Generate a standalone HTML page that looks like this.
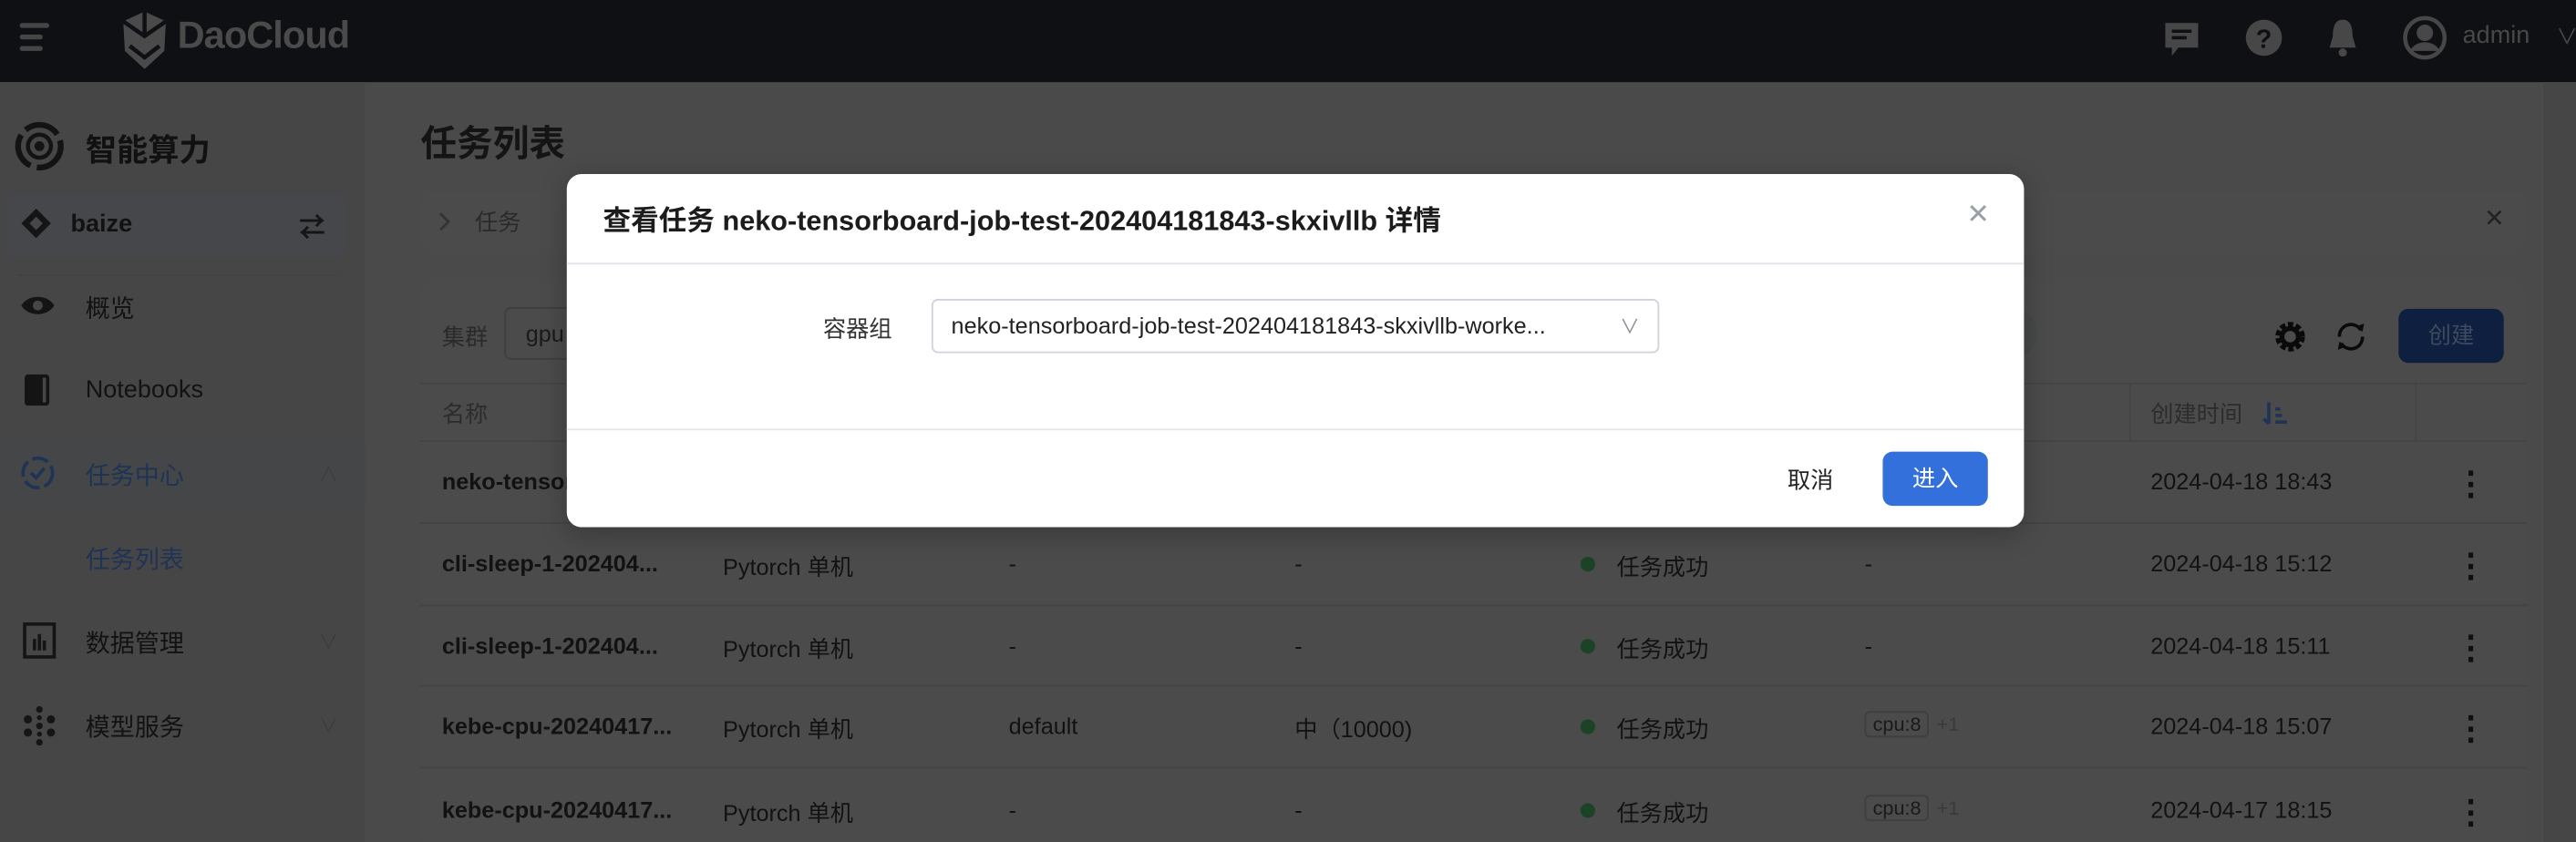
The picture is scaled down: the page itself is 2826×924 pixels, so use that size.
<!DOCTYPE html>
<html><head><meta charset="utf-8"><style>
*{box-sizing:border-box;margin:0;padding:0}
html,body{width:2826px;height:924px;overflow:hidden;background:#4a4a4a}
#w{width:1568px;height:513px;transform:scale(1.80230);transform-origin:0 0;position:relative;font-family:"Liberation Sans","Noto Sans CJK SC",sans-serif;color:#121212;background:#4a4a4a}
.a{position:absolute;white-space:nowrap}
.hdr{left:0;top:0;width:1568px;height:50px;background:#0f1013}
.side{left:0;top:50px;width:222px;height:463px;background:#464646}
.card{background:#4b4b4b;border-radius:8px}
.t14{font-size:14px}
.b{font-weight:bold}
.row{position:absolute;left:256px;width:1282px;height:50px;border-top:1px solid #444}
.dot{position:absolute;width:9px;height:9px;border-radius:50%;background:#1c4326}
.tag{border:1px solid #3e3e3e;border-radius:3px;padding:0 4px;font-size:12px;color:#1a1a1a}
.dm{font-size:20px;font-weight:bold;color:#0f0f0f}
</style></head><body><div id="w">
<div class="a hdr"></div>
<div class="a" style="left:12px;top:14px;width:18px;height:3px;background:#454545;border-radius:2px"></div>
<div class="a" style="left:12px;top:21px;width:14px;height:3px;background:#454545;border-radius:2px"></div>
<div class="a" style="left:12px;top:28px;width:14px;height:3px;background:#454545;border-radius:2px"></div>
<svg class="a" style="left:70px;top:5px" width="36" height="40" viewBox="0 0 36 40"><path d="M18 2 L31 8 L30 26 L18 37 L6 26 L5 8 Z" fill="#4a4a4a"/><path d="M18 2 L18 17 M5 8 L18 17 L31 8 M9 23 L18 30 L27 23" stroke="#0f1013" stroke-width="2.5" fill="none"/></svg>
<div class="a" style="left:108px;top:8px;font-size:23px;font-weight:bold;color:#4a4a4a;letter-spacing:-0.5px">DaoCloud</div>
<svg class="a" style="left:1316px;top:12px" width="24" height="26" viewBox="0 0 24 26"><path d="M2 2 H22 V17 H10 L6 22 V17 H2 Z" fill="#474747"/><path d="M6 7 H18 M6 11 H15" stroke="#0f1013" stroke-width="2"/></svg>
<svg class="a" style="left:1366px;top:10px" width="24" height="26"><circle cx="12" cy="13" r="11" fill="#474747"/><text x="12" y="19" font-size="16" font-weight="bold" text-anchor="middle" fill="#0f1013" font-family="Liberation Sans">?</text></svg>
<svg class="a" style="left:1414px;top:10px" width="24" height="26" viewBox="0 0 24 26"><path d="M12 2 C7 2 6 7 6 12 L4 19 H20 L18 12 C18 7 17 2 12 2Z" fill="#474747"/><circle cx="12" cy="22" r="2.5" fill="#474747"/></svg>
<svg class="a" style="left:1462px;top:9px" width="28" height="30"><circle cx="14" cy="14" r="12" fill="none" stroke="#474747" stroke-width="2.5"/><circle cx="14" cy="11" r="5" fill="#474747"/><path d="M5 22 C8 15 20 15 23 22" fill="#474747"/></svg>
<div class="a" style="left:1499px;top:13px;font-size:15px;color:#484848">admin</div>
<div class="a" style="left:1556px;top:12px;font-size:13px;color:#484848">∨</div>

<div class="a side"></div>
<svg class="a" style="left:8px;top:72px" width="32" height="34"><circle cx="16" cy="17" r="13" fill="none" stroke="#131313" stroke-width="3.5" stroke-dasharray="22 4"/><circle cx="16" cy="17" r="7" fill="none" stroke="#131313" stroke-width="2.5"/><circle cx="16" cy="17" r="3" fill="#131313"/></svg>
<div class="a" style="left:52px;top:77px;font-size:19px;font-weight:bold;color:#111">智能算力</div>
<div class="a" style="left:4px;top:117px;width:206px;height:40px;background:#45474a;border-radius:6px"></div>
<svg class="a" style="left:12px;top:126px" width="20" height="20"><path d="M10 1 L19 10 L10 19 L1 10Z M10 6 L14 10 L10 14 L6 10Z" fill="#151515" fill-rule="evenodd"/></svg>
<div class="a b" style="left:43px;top:128px;font-size:15px">baize</div>
<div class="a" style="left:182px;top:125px;font-size:16px;font-weight:bold;color:#151515">⇄</div>
<div class="a" style="left:11px;top:167px;width:194px;height:1px;background:#424242"></div>
<svg class="a" style="left:12px;top:176px" width="22" height="20"><path d="M1 10 C5 3 17 3 21 10 C17 17 5 17 1 10Z" fill="#141414"/><circle cx="11" cy="10" r="3" fill="#464646"/></svg>
<div class="a" style="left:52px;top:177px;font-size:15px">概览</div>
<svg class="a" style="left:14px;top:227px" width="18" height="22"><rect x="1" y="1" width="15" height="19" rx="2" fill="#141414"/><rect x="12" y="3" width="2" height="15" fill="#464646"/></svg>
<div class="a" style="left:52px;top:229px;font-size:15px">Notebooks</div>
<div class="a" style="left:0;top:268px;width:222px;height:40px;background:#444648"></div>
<svg class="a" style="left:12px;top:277px" width="22" height="22"><circle cx="11" cy="11" r="9" fill="none" stroke="#1e3356" stroke-width="2" stroke-dasharray="10 3"/><path d="M7 11 L10 14 L15 8" stroke="#1e3356" stroke-width="2" fill="none"/></svg>
<div class="a" style="left:52px;top:279px;font-size:15px;color:#1e3356">任务中心</div>
<div class="a" style="left:194px;top:280px;font-size:12px;color:#3d3d3d">∧</div>
<div class="a" style="left:52px;top:330px;font-size:15px;color:#1e3356">任务列表</div>
<svg class="a" style="left:13px;top:378px" width="22" height="24"><rect x="2" y="2" width="18" height="20" fill="none" stroke="#151515" stroke-width="2"/><path d="M8 18 V11 M11 18 V8 M14 18 V12" stroke="#151515" stroke-width="2"/></svg>
<div class="a" style="left:52px;top:381px;font-size:15px">数据管理</div>
<div class="a" style="left:194px;top:382px;font-size:12px;color:#3d3d3d">∨</div>
<svg class="a" style="left:13px;top:429px" width="22" height="26"><g fill="#151515"><circle cx="11" cy="3" r="2"/><circle cx="11" cy="23" r="2"/><circle cx="4" cy="9" r="2.5"/><circle cx="18" cy="9" r="2.5"/><circle cx="4" cy="17" r="2.5"/><circle cx="18" cy="17" r="2.5"/><circle cx="11" cy="13" r="2"/><circle cx="11" cy="8" r="1.5"/><circle cx="11" cy="18" r="1.5"/></g></svg>
<div class="a" style="left:52px;top:432px;font-size:15px">模型服务</div>
<div class="a" style="left:194px;top:433px;font-size:12px;color:#3d3d3d">∨</div>

<div class="a" style="left:256px;top:70px;font-size:22px;font-weight:bold;color:#141414">任务列表</div>
<div class="a card" style="left:256px;top:117px;width:1282px;height:35px"></div>
<svg class="a" style="left:266px;top:128px" width="10" height="14"><path d="M2 2 L7 7 L2 12" stroke="#333" stroke-width="1.5" fill="none"/></svg>
<div class="a" style="left:289px;top:125px;font-size:14px;color:#2a2a2a">任务</div>
<div class="a" style="left:1512px;top:124px;font-size:15px;color:#222">✕</div>
<div class="a card" style="left:256px;top:172px;width:1282px;height:345px"></div>
<div class="a" style="left:269px;top:195px;font-size:14px;color:#2a2a2a">集群</div>
<div class="a" style="left:307px;top:187px;width:160px;height:32px;border:1px solid #3e3e3e;border-radius:4px;padding:7px 12px;font-size:14px;color:#1a1a1a">gpu</div>
<div class="a" style="left:1180px;top:187px;width:60px;height:32px;background:#474849;border-radius:16px"></div>
<svg class="a" style="left:1384px;top:195px" width="20" height="20"><circle cx="10" cy="10" r="7" fill="none" stroke="#0a0a0a" stroke-width="4" stroke-dasharray="3 1.5"/><circle cx="10" cy="10" r="5" fill="none" stroke="#0a0a0a" stroke-width="3"/></svg>
<svg class="a" style="left:1420px;top:194px" width="22" height="22"><path d="M4 11 A7 7 0 0 1 17 7 M18 11 A7 7 0 0 1 5 15" stroke="#0a0a0a" stroke-width="2" fill="none"/><path d="M14 5 L18 8 L19 3Z M8 17 L4 14 L3 19Z" fill="#0a0a0a"/></svg>
<div class="a" style="left:1460px;top:188px;width:64px;height:33px;background:#0e1f3f;border-radius:6px;color:#3e4a5f;font-size:14px;text-align:center;line-height:33px">创建</div>
<div class="a" style="left:256px;top:233px;width:1282px;height:35px;border-top:1px solid #444"></div>
<div class="a" style="left:269px;top:242px;font-size:14px;color:#2c2c2c">名称</div>
<div class="a" style="left:1296px;top:233px;width:1px;height:35px;background:#444"></div>
<div class="a" style="left:1470px;top:233px;width:1px;height:35px;background:#444"></div>
<div class="a" style="left:1309px;top:242px;font-size:14px;color:#2c2c2c">创建时间</div>
<svg class="a" style="left:1377px;top:244px" width="16" height="16"><path d="M4 1 V14 M1 11 L4 14 M8 5 H11 M8 9 H12 M8 13 H15" stroke="#1e3356" stroke-width="2" fill="none"/></svg>

<div class="row" style="top:268px"></div>
<div class="a b t14" style="left:269px;top:285px">neko-tensorboard</div>
<div class="a t14" style="left:1309px;top:285px">2024-04-18 18:43</div>
<div class="a dm" style="left:1494px;top:282px">⋮</div>

<div class="row" style="top:318px"></div>
<div class="a b t14" style="left:269px;top:335px">cli-sleep-1-202404...</div>
<div class="a t14" style="left:440px;top:335px">Pytorch 单机</div>
<div class="a t14" style="left:614px;top:335px">-</div>
<div class="a t14" style="left:788px;top:335px">-</div>
<div class="dot" style="left:962px;top:339px"></div>
<div class="a t14" style="left:984px;top:335px">任务成功</div>
<div class="a t14" style="left:1135px;top:335px">-</div>
<div class="a t14" style="left:1309px;top:335px">2024-04-18 15:12</div>
<div class="a dm" style="left:1494px;top:332px">⋮</div>

<div class="row" style="top:368px"></div>
<div class="a b t14" style="left:269px;top:385px">cli-sleep-1-202404...</div>
<div class="a t14" style="left:440px;top:385px">Pytorch 单机</div>
<div class="a t14" style="left:614px;top:385px">-</div>
<div class="a t14" style="left:788px;top:385px">-</div>
<div class="dot" style="left:962px;top:389px"></div>
<div class="a t14" style="left:984px;top:385px">任务成功</div>
<div class="a t14" style="left:1135px;top:385px">-</div>
<div class="a t14" style="left:1309px;top:385px">2024-04-18 15:11</div>
<div class="a dm" style="left:1494px;top:382px">⋮</div>

<div class="row" style="top:417px"></div>
<div class="a b t14" style="left:269px;top:434px">kebe-cpu-20240417...</div>
<div class="a t14" style="left:440px;top:434px">Pytorch 单机</div>
<div class="a t14" style="left:614px;top:434px">default</div>
<div class="a t14" style="left:788px;top:434px">中（10000)</div>
<div class="dot" style="left:962px;top:438px"></div>
<div class="a t14" style="left:984px;top:434px">任务成功</div>
<div class="a" style="left:1135px;top:432px"><span class="tag">cpu:8</span> <span style="font-size:12px;color:#3a3a3a">+1</span></div>
<div class="a t14" style="left:1309px;top:434px">2024-04-18 15:07</div>
<div class="a dm" style="left:1494px;top:431px">⋮</div>

<div class="row" style="top:467px"></div>
<div class="a b t14" style="left:269px;top:485px">kebe-cpu-20240417...</div>
<div class="a t14" style="left:440px;top:485px">Pytorch 单机</div>
<div class="a t14" style="left:614px;top:485px">-</div>
<div class="a t14" style="left:788px;top:485px">-</div>
<div class="dot" style="left:962px;top:489px"></div>
<div class="a t14" style="left:984px;top:485px">任务成功</div>
<div class="a" style="left:1135px;top:483px"><span class="tag">cpu:8</span> <span style="font-size:12px;color:#3a3a3a">+1</span></div>
<div class="a t14" style="left:1309px;top:485px">2024-04-17 18:15</div>
<div class="a dm" style="left:1494px;top:482px">⋮</div>
<div class="a" style="left:1548px;top:50px;width:20px;height:463px;background:#464646"></div>

<div class="a" style="left:345px;top:106px;width:887px;height:215px;background:#fff;border-radius:9px;box-shadow:0 4px 16px rgba(0,0,0,.25)"></div>
<div class="a" style="left:367px;top:120px;font-size:17px;font-weight:bold;color:#1c1c1c">查看任务 neko-tensorboard-job-test-202404181843-skxivllb 详情</div>
<div class="a" style="left:1197px;top:121px;font-size:17px;color:#9aa0a8">✕</div>
<div class="a" style="left:345px;top:160px;width:887px;height:1px;background:#e4e5ea"></div>
<div class="a" style="left:501px;top:190px;font-size:14px;color:#333">容器组</div>
<div class="a" style="left:567px;top:182px;width:443px;height:33px;border:1px solid #cfd2da;border-radius:4px"></div>
<div class="a" style="left:579px;top:190px;font-size:14px;color:#222">neko-tensorboard-job-test-202404181843-skxivllb-worke...</div>
<div class="a" style="left:986px;top:190px;font-size:12px;color:#8a8f99">∨</div>
<div class="a" style="left:345px;top:261px;width:887px;height:1px;background:#e4e5ea"></div>
<div class="a" style="left:1088px;top:282px;font-size:14px;color:#222">取消</div>
<div class="a" style="left:1146px;top:275px;width:64px;height:33px;background:#3370db;border-radius:6px;color:#fff;font-size:14px;text-align:center;line-height:33px">进入</div>
</div></body></html>
